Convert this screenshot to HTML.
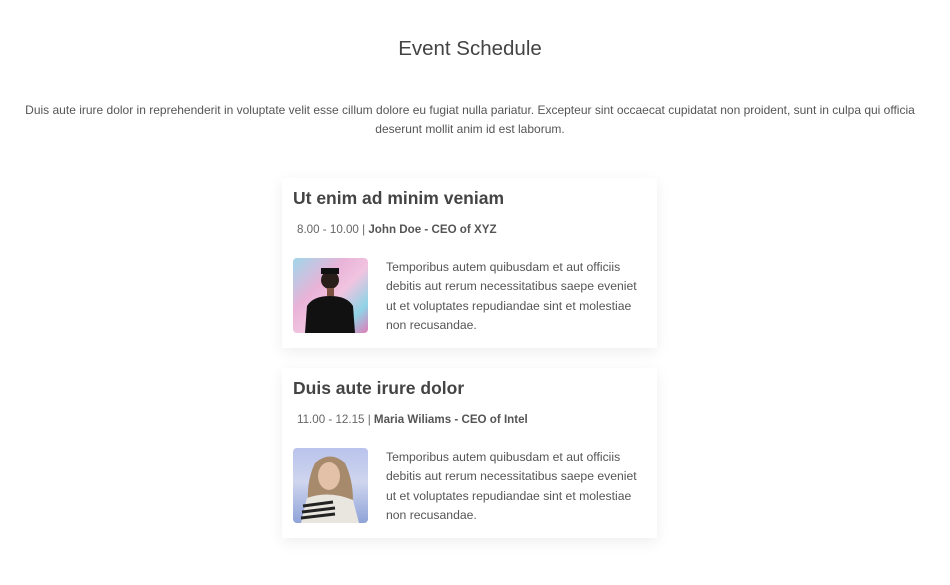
<!DOCTYPE html>
<html><head><meta charset="utf-8"><style>
*{margin:0;padding:0;box-sizing:border-box}
body{width:950px;height:585px;background:#fff;font-family:"Liberation Sans",sans-serif;color:#555;position:relative;overflow:hidden}
h1{position:absolute;top:37px;left:0;width:940px;text-align:center;font-size:20.5px;font-weight:normal;color:#444}
.intro{position:absolute;top:101px;left:10px;width:920px;text-align:center;font-size:12px;line-height:19px;color:#555}
.card{position:absolute;left:282px;width:375px;height:170px;background:#fff;box-shadow:0 4px 14px rgba(0,0,0,0.07)}
.card h2{position:absolute;left:11px;top:10px;font-size:17.5px;font-weight:bold;color:#444}
.meta{position:absolute;left:15px;top:45px;font-size:11.6px;color:#666}
.meta b{color:#555}
.img{position:absolute;left:11px;top:80px;width:75px;height:75px;border-radius:4px;overflow:hidden}
.txt{position:absolute;left:104px;top:80px;width:260px;font-size:12.2px;line-height:19.3px;color:#555}
</style></head><body>
<h1>Event Schedule</h1>
<div class="intro">Duis aute irure dolor in reprehenderit in voluptate velit esse cillum dolore eu fugiat nulla pariatur. Excepteur sint occaecat cupidatat non proident, sunt in culpa qui officia deserunt mollit anim id est laborum.</div>

<div class="card" style="top:178px">
<h2>Ut enim ad minim veniam</h2>
<div class="meta">8.00 - 10.00 | <b>John Doe - CEO of XYZ</b></div>
<div class="img" style="background:linear-gradient(135deg,#9fd6ea 0%,#e9b3d8 35%,#f1c4e0 55%,#8fd3e6 80%,#e27bb7 100%)">
<svg width="75" height="75"><circle cx="37" cy="22" r="9" fill="#2a1e1a"/><rect x="28" y="10" width="18" height="6" fill="#111"/><rect x="34" y="30" width="7" height="8" fill="#7a5040"/><path d="M12 75 L14 48 Q20 38 37 38 Q54 38 60 48 L62 75Z" fill="#111"/></svg>
</div>
<div class="txt">Temporibus autem quibusdam et aut officiis debitis aut rerum necessitatibus saepe eveniet ut et voluptates repudiandae sint et molestiae non recusandae.</div>
</div>

<div class="card" style="top:368px">
<h2>Duis aute irure dolor</h2>
<div class="meta">11.00 - 12.15 | <b>Maria Wiliams - CEO of Intel</b></div>
<div class="img" style="background:linear-gradient(180deg,#b9c3ec 0%,#cfd5ee 45%,#8fa3d8 100%)">
<svg width="75" height="75"><path d="M18 75 Q10 40 22 15 Q37 2 52 15 Q64 40 58 75Z" fill="#a78a6c"/><ellipse cx="36" cy="28" rx="11" ry="14" fill="#e3c0a8"/><path d="M8 75 L14 50 Q36 42 60 52 L66 75Z" fill="#e9e6e0"/><path d="M10 58 L40 54 M9 64 L42 60 M8 70 L42 66" stroke="#222" stroke-width="3"/></svg>
</div>
<div class="txt">Temporibus autem quibusdam et aut officiis debitis aut rerum necessitatibus saepe eveniet ut et voluptates repudiandae sint et molestiae non recusandae.</div>
</div>
</body></html>
